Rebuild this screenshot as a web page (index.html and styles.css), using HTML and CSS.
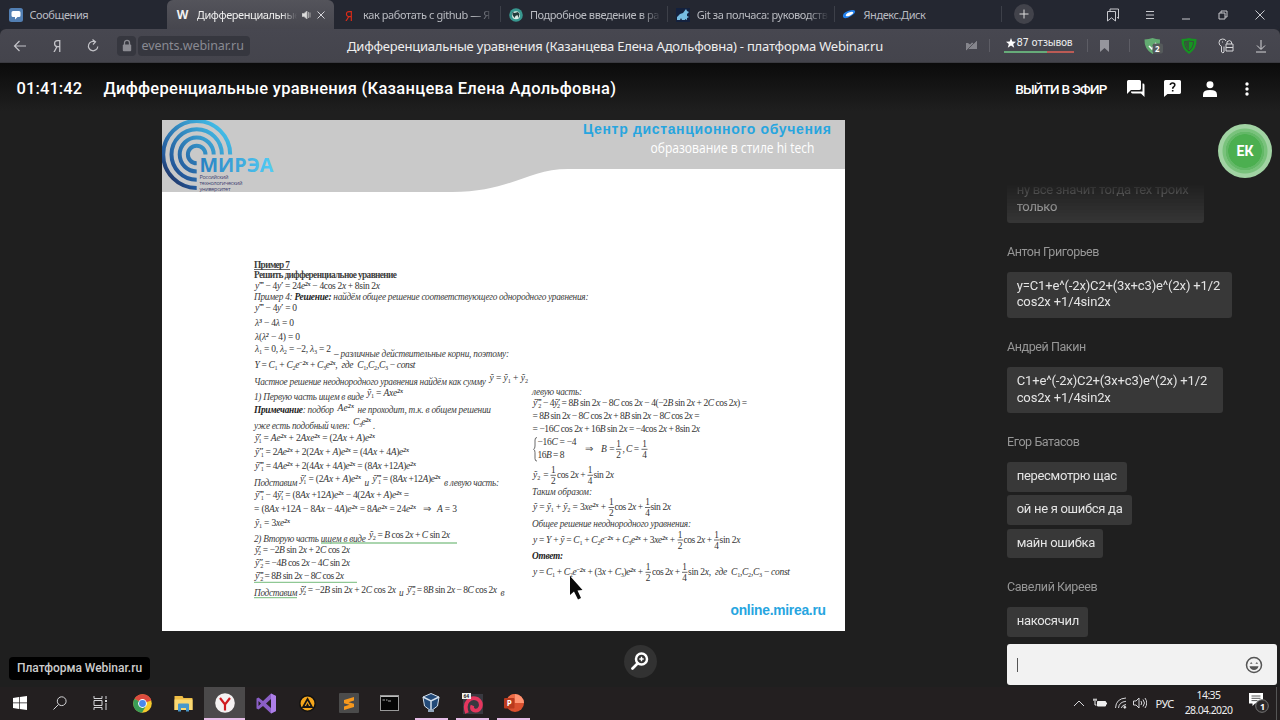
FILE: index.html
```html
<!DOCTYPE html>
<html lang="ru">
<head>
<meta charset="utf-8">
<title>Дифференциальные уравнения (Казанцева Елена Адольфовна)</title>
<link rel="stylesheet" href="styles.css">
</head>
<body>
<div class="screen">
  <div class="tabs">
    <div class="tab"><svg class="fav" viewBox="0 0 14 14"><rect width="14" height="14" rx="2.5" fill="#527fb3"/><path d="M4 3h6q1.500 0 1.500 1.500v3Q11.500 9 10 9H8.500L6 11.500V9H4Q2.500 9 2.500 7.500v-3Q2.500 3 4 3z" fill="#fff"/></svg><span class="tab-t">Сообщения</span></div>
    <div class="tab active"><b class="fav w">W</b><span class="tab-t fade">Дифференциальные</span>
      <svg class="snd" viewBox="0 0 9 8"><path d="M0 2.500h2L5 0v8L2 5.500H0zM6.500 1v6M8 1.500v5" fill="#ddd" stroke="#bbb" stroke-width=".8"/></svg>
      <svg class="cls" viewBox="0 0 8 8"><path d="M.5.5l7 7M7.500.5l-7 7" stroke="#d5d5da" fill="none"/></svg></div>
    <div class="tab"><span class="fav ya">Я</span><span class="tab-t fade">как работать с github — Я</span></div>
    <div class="tab sep"><svg class="fav" viewBox="0 0 14 14"><circle cx="7" cy="7" r="6.800" fill="#38978f"/><circle cx="7" cy="7.300" r="4" fill="#d9ece5"/><path d="M3.500 4l2 1 3.500-1 1.500 2-1 4-1-3-2 1-1 2-2-3z" fill="#233b3b"/></svg><span class="tab-t fade">Подробное введение в ра</span></div>
    <div class="tab sep"><svg class="fav" viewBox="0 0 14 14"><rect width="14" height="14" fill="#14213d"/><path d="M1 12V9l3-3 3-1 3-4 1 2 2 1-2 2v2l2 1-2 1v2l-2-1v1H6l-1-2-1 2z" fill="#76bce2"/></svg><span class="tab-t fade">Git за полчаса: руководств</span></div>
    <div class="tab sep"><svg class="fav" viewBox="0 0 14 14"><path d="M1 9Q0 5 6 3q6-2 7 0t-4 5Q3 12 1 9z" fill="#2280ed"/><ellipse cx="7.500" cy="6" rx="4" ry="1.600" fill="#fff" transform="rotate(-25 7.500 6)"/></svg><span class="tab-t">Яндекс.Диск</span></div>
    <div class="newtab sep"><svg width="20" height="20" viewBox="0 0 20 20"><circle cx="10" cy="10" r="10" fill="#42434b"/><path d="M10 5.500v9M5.500 10h9" stroke="#ddd"/></svg></div>
    <div class="win">
      <svg viewBox="0 0 14 14"><path d="M4 3V1h8.500v9.500L11 9.200M1.500 3.500h8V13L5.500 9.800 1.500 13z" /></svg>
      <svg viewBox="0 0 14 14"><path d="M3 3.500h8M3 7h8M3 10.500h8"/></svg>
      <svg viewBox="0 0 14 14"><path d="M3 11h8"/></svg>
      <svg viewBox="0 0 14 14"><path d="M3 5h6v6H3zM5 5V3h6v6H9"/></svg>
      <svg viewBox="0 0 14 14"><path d="M2.500 2.500l9 9M11.500 2.500l-9 9"/></svg>
    </div>
  </div>

  <div class="toolbar">
    <svg class="ic back" viewBox="0 0 14 14"><path d="M13 7H1.500M6.500 2l-5 5 5 5"/></svg>
    <span class="yhome">Я</span>
    <svg class="ic reload" viewBox="0 0 14 14"><path d="M11.800 7.500a4.700 4.700 0 1 1-2.700-4.700M6.500.5l3 2.300-2.500 2.700"/></svg>
    <span class="lock"><svg width="10" height="13" viewBox="0 0 10 13"><path d="M2.500 6V3.800a2.500 2.500 0 0 1 5 0V6" fill="none" stroke="#8b8b92" stroke-width="1.300"/><rect x=".8" y="5.500" width="8.400" height="6.800" rx="1" fill="#8b8b92"/></svg></span>
    <span class="url">events.webinar.ru</span>
    <span class="ptitle">Дифференциальные уравнения (Казанцева Елена Адольфовна) - платформа Webinar.ru</span>
    <div class="tools">
      <svg class="i1" width="13" height="13" viewBox="0 0 13 13"><path d="M1 4h2l2 1.500L7 3.500 9 4.500 12 1.500V10H3.500L1 12z" fill="#85858c"/><path d="M1 12L12 1" stroke="#45454d" stroke-width=".8"/></svg>
      <i class="bar"></i>
      <div class="rev"><span><svg width="10" height="10" viewBox="0 0 10 10"><path d="M5 0l1.300 3.500L10 3.700 7.200 6l1 3.700L5 7.600 1.800 9.700l1-3.700L0 3.700l3.700-.2z" fill="#fff"/></svg>87 отзывов</span><i></i></div>
      <i class="bar b2"></i>
      <svg class="i2" width="9" height="12" viewBox="0 0 9 12"><path d="M0 0h9v12L4.500 8 0 12z" fill="#96969d"/></svg>
      <i class="bar b3"></i>
      <svg class="i3" width="20" height="18" viewBox="0 0 20 18"><path d="M.5 2.500Q5 2 8.500 1q3.500 1 7.500 1.500 1 9-7.500 14.500Q0 12 .5 2.500z" fill="#63ac72"/><path d="M5 9l3 3 4-6" stroke="#fff" fill="none" stroke-width="1.500"/><rect x="8.500" y="6.500" width="10.500" height="10" rx="2" fill="#555a5b"/><text x="11" y="15" class="two">2</text></svg>
      <svg class="i4" width="16" height="18" viewBox="0 0 16 18"><path d="M.5 2Q5 2 8 1q3 1 7.500 1 .5 10-7.500 15Q0 12 .5 2z" fill="#169422"/><path d="M3.500 4.500Q6 4.500 8 4q2 .5 4.500.5 0 6-4.500 9.500Q3.500 11 3.500 4.500z" fill="none" stroke="#3b4a3d"/><path d="M8 4.500v9Q4.500 10 4.200 5z" fill="#335b39"/></svg>
      <svg class="i5 ln" width="16" height="16" viewBox="0 0 16 16"><path d="M3.500 14V8.300Q1 7.500 1 4.500 1 1 4.500 1q3 0 3.500 2M3.500 14l1.500 1 1-1V8.500M4 4h1M9 6V3.800q2.500-2.500 4.500 0V6M8 6v7h7V6zM8 9.500h7"/></svg>
      <svg class="i6 ln" width="12" height="14" viewBox="0 0 12 14"><path d="M6 1v9M2 6.500l4 4 4-4M1 13h10"/></svg>
    </div>
  </div>

  <div class="app">
    <div class="head">
      <span class="time">01:41:42</span>
      <span class="title">Дифференциальные уравнения (Казанцева Елена Адольфовна)</span>
      <span class="air">ВЫЙТИ В ЭФИР</span>
      <svg width="18" height="17" viewBox="0 0 18 17"><path d="M1.500 0h11Q14 0 14 1.500v7q0 1.500-1.500 1.500H4L0 14V1.500Q0 0 1.500 0zM15.500 3.500H16q1.500 0 1.500 1.500v12L14 13.500H5.500Q4 13.500 4 12v-.5h11.500z" fill="#fff"/></svg>
      <svg class="h2" width="18" height="17" viewBox="0 0 18 17"><path d="M1.500 0h14Q17 0 17 1.500v11q0 1.500-1.500 1.500H3.500L0 17V1.500Q0 0 1.500 0z" fill="#fff"/><path d="M6.300 5Q6.500 3 8.600 3q2.200 0 2.200 2 0 1-1.200 2-.9.7-.9 1.800M8.700 10v1.600" stroke="#111" stroke-width="1.600" fill="none"/></svg>
      <svg class="h3" width="14" height="16" viewBox="0 0 14 16"><circle cx="7" cy="3.700" r="3.500" fill="#fff"/><path d="M0 16v-2.500Q0 9 7 9t7 4.500V16z" fill="#fff"/></svg>
      <svg class="h4" width="4" height="14" viewBox="0 0 4 14"><g fill="#fff"><circle cx="2" cy="2" r="1.700"/><circle cx="2" cy="7" r="1.700"/><circle cx="2" cy="12" r="1.700"/></g></svg>
    </div>
    <div class="body">
      <div class="stage">
        <svg class="slide" viewBox="162 120 683 511">
          <defs>
            <linearGradient id="ring" x1="165" y1="186" x2="226" y2="130" gradientUnits="userSpaceOnUse"><stop offset="0" stop-color="#1f2148"/><stop offset=".25" stop-color="#245a9c"/><stop offset="1" stop-color="#43c0ea"/></linearGradient>
            <linearGradient id="word" x1="200" y1="0" x2="274" y2="0" gradientUnits="userSpaceOnUse"><stop offset="0" stop-color="#2680c2"/><stop offset="1" stop-color="#52cdf5"/></linearGradient>
          </defs>
          <rect x="162" y="120" width="683" height="511" fill="#fff"/>
          <path d="M162 120H845V169H568C528 169 510 192 452 192H162z" fill="#c9c9c9"/>
          <g fill="none" stroke="url(#ring)" stroke-width="4">
            <path d="M230.200 154.500a33.500 33.500 0 1 0-33.500 33.500"/>
            <path d="M221.900 154.500a25.200 25.200 0 1 0-25.200 25.200"/>
            <path d="M213.700 154.500a17 17 0 1 0-17 17"/>
            <path d="M205.500 154.500a8.800 8.800 0 1 0-8.800 8.800"/>
          </g>
          <text class="word" x="199.500" y="171.700" textLength="74" lengthAdjust="spacingAndGlyphs" fill="url(#word)">МИРЭА</text>
          <g class="tiny"><text x="199.500" y="178.500" textLength="29">Российский</text><text x="199.500" y="184.500" textLength="43">технологический</text><text x="199.500" y="190.500" textLength="31">университет</text></g>
          <text class="cdo" x="583" y="134" textLength="248">Центр дистанционного обучения</text>
          <text class="hi" x="650.500" y="152.500" textLength="164" lengthAdjust="spacingAndGlyphs">образование в стиле hi tech</text>
          <text class="cdo site" x="730.500" y="614.500" textLength="95.500">online.mirea.ru</text>

          <g class="prose">
            <text class="bd" x="254" y="268" textLength="36">Пример 7</text><path d="M254 269.500h36" stroke="#444" stroke-width=".8"/>
            <text class="bd" x="254" y="277.500" textLength="143">Решить дифференциальное уравнение</text>
            <text x="254" y="300.300" textLength="334.500">Пример 4: <tspan class="bi">Решение:</tspan> найдём общее решение соответствующего однородного уравнения:</text>
            <text x="334" y="356.500" textLength="175">– различные действительные корни, поэтому:</text>
            <text x="254" y="385" textLength="232">Частное решение неоднородного уравнения найдём как сумму</text>
            <text x="254" y="399.500" textLength="110">1) Первую часть ищем в виде</text>
            <text x="254" y="412.500" textLength="80"><tspan class="bi">Примечание</tspan>: подбор</text>
            <text x="357.500" y="412.500" textLength="133.500">не проходит, т.к. в общем решении</text>
            <text x="254" y="428.700" textLength="96">уже есть подобный член:</text>
            <text x="373" y="428.700">.</text>
            <text x="254" y="485.500" textLength="43.500">Подставим</text>
            <text x="364.500" y="485.500">и</text>
            <text x="444" y="485.500" textLength="55">в левую часть:</text>
            <text x="254" y="542" textLength="112">2) Вторую часть ищем в виде</text>
            <text x="254" y="596" textLength="43.500">Подставим</text>
            <text x="399" y="596">и</text>
            <text x="500.500" y="596">в</text>
            <text x="532" y="394.500" textLength="50">левую часть:</text>
            <text x="532" y="494.500" textLength="60">Таким образом:</text>
            <text x="532" y="527" textLength="159">Общее решение неоднородного уравнения:</text>
            <text x="532" y="558.500" textLength="31"><tspan class="bi">Ответ:</tspan></text>
          </g>
          <path d="M321 543h136M254 582.300h103M254 597.600h43" stroke="#8fc894" stroke-width="1.300"/>

          <g class="math">
            <text x="255" y="289" textLength="125">y^{‴} − 4y^{′} = 24e^{2x} − 4cos 2x + 8sin 2x</text>
            <text x="255" y="311" textLength="42">y^{‴} − 4y^{′} = 0</text>
            <text x="255" y="325.700" textLength="39">λ^{3} − 4λ = 0</text>
            <text x="255" y="339.700" textLength="45">λ(λ^{2} − 4) = 0</text>
            <text x="255" y="352" textLength="76">λ_{1} = 0, λ_{2} = −2, λ_{3} = 2</text>
            <text x="254.500" y="368.300" textLength="161">Y = C_{1} + C_{2}e^{−2x} + C_{3}e^{2x},  где  C_{1},C_{2},C_{3} − const</text>
            <text x="489.500" y="381" textLength="38.500">ỹ = ỹ_{1} + ỹ_{2}</text>
            <text x="367" y="396" textLength="36">ỹ_{1} = Axe^{2x}</text>
            <text x="337.500" y="410.500" textLength="16.500">Ae^{2x}</text>
            <text x="353" y="424.500" textLength="18">C_{3}e^{2x}</text>
            <text x="255" y="440.700" textLength="120">ỹ^{′}_{1} = Ae^{2x} + 2Axe^{2x} = (2Ax + A)e^{2x}</text>
            <text x="255" y="454.500" textLength="154">ỹ^{″}_{1} = 2Ae^{2x} + 2(2Ax + A)e^{2x} = (4Ax + 4A)e^{2x}</text>
            <text x="255" y="468.700" textLength="161">ỹ^{‴}_{1} = 4Ae^{2x} + 2(4Ax + 4A)e^{2x} = (8Ax +12A)e^{2x}</text>
            <text x="300" y="482" textLength="61">ỹ^{′}_{1} = (2Ax + A)e^{2x}</text>
            <text x="372.500" y="482" textLength="68">ỹ^{‴}_{1} = (8Ax +12A)e^{2x}</text>
            <text x="255" y="497.500" textLength="154">ỹ^{‴}_{1} − 4ỹ^{′}_{1} = (8Ax +12A)e^{2x} − 4(2Ax + A)e^{2x} =</text>
            <text x="254" y="511.500" textLength="203">= (8Ax +12A − 8Ax − 4A)e^{2x} = 8Ae^{2x} = 24e^{2x}   ⇒   A = 3</text>
            <text x="255" y="526" textLength="35">ỹ_{1} = 3xe^{2x}</text>
            <text x="369" y="538" textLength="81">ỹ_{2} = B cos 2x + C sin 2x</text>
            <text x="255" y="553" textLength="95">ỹ^{′}_{2} = −2B sin 2x + 2C cos 2x</text>
            <text x="255" y="566" textLength="95">ỹ^{″}_{2} = −4B cos 2x − 4C sin 2x</text>
            <text x="255" y="579" textLength="89">ỹ^{‴}_{2} = 8B sin 2x − 8C cos 2x</text>
            <text x="300" y="592.500" textLength="96">ỹ^{′}_{2} = −2B sin 2x + 2C cos 2x</text>
            <text x="407" y="592.500" textLength="90">ỹ^{‴}_{2} = 8B sin 2x − 8C cos 2x</text>

            <text x="533" y="405.500" textLength="214">ỹ^{‴}_{2} − 4ỹ^{′}_{2} = 8B sin 2x − 8C cos 2x − 4(−2B sin 2x + 2C cos 2x) =</text>
            <text x="532.500" y="418.500" textLength="167">= 8B sin 2x − 8C cos 2x + 8B sin 2x − 8C cos 2x =</text>
            <text x="532.500" y="431.500" textLength="167.500">= −16C cos 2x + 16B sin 2x = −4cos 2x + 8sin 2x</text>
            <text x="537.500" y="445" textLength="39">−16C = −4</text>
            <text x="537.500" y="458" textLength="27">16B = 8</text>
            <text x="584.500" y="452">⇒</text>
            <text x="601" y="452" textLength="13.500">B =</text>
            <text x="622.500" y="452" textLength="16.500">, C =</text>
            <text x="533" y="478" textLength="15.500">ỹ_{2} =</text>
            <text x="557" y="478" textLength="28.500">cos 2x +</text>
            <text x="593.500" y="478" textLength="20.500">sin 2x</text>
            <text x="533" y="510.300" textLength="73">ỹ = ỹ_{1} + ỹ_{2} = 3xe^{2x} +</text>
            <text x="614.500" y="510.300" textLength="28.500">cos 2x +</text>
            <text x="650.500" y="510.300" textLength="20.500">sin 2x</text>
            <text x="533" y="542.700" textLength="142">y = Y + ỹ = C_{1} + C_{2}e^{−2x} + C_{3}e^{2x} + 3xe^{2x} +</text>
            <text x="683.500" y="542.700" textLength="28.500">cos 2x +</text>
            <text x="719.500" y="542.700" textLength="21">sin 2x</text>
            <text x="533" y="575" textLength="110">y = C_{1} + C_{2}e^{−2x} + (3x + C_{3})e^{2x} +</text>
            <text x="652" y="575" textLength="28">cos 2x +</text>
            <text x="688" y="575" textLength="102">sin 2x,  где  C_{1},C_{2},C_{3} − const</text>
          </g>
          <path d="M537 437.500q-2 0-2 2.500v6q0 3-1.500 3.300 1.500.3 1.500 3.300v6q0 2.500 2 2.500" fill="none" stroke="#444" stroke-width=".8"/>
          <path d="M616 449.300h5.500M641.500 449.300h6M550.500 475.300h5.500M587.500 475.300h5.500M608.500 507.500h5.500M645 507.500h5.500M677.500 540h5.500M714 540h5.500M645.500 572.300h5.500M682 572.300h5.500" stroke="#444" stroke-width=".8"/>
          <g class="frac">
            <text x="618.700" y="447">1</text><text x="618.700" y="458">2</text><text x="644.500" y="447">1</text><text x="644.500" y="458">4</text>
            <text x="553.300" y="472.700">1</text><text x="553.300" y="484">2</text><text x="590.200" y="472.700">1</text><text x="590.200" y="484">4</text>
            <text x="611.300" y="505">1</text><text x="611.300" y="516.200">2</text><text x="647.700" y="505">1</text><text x="647.700" y="516.200">4</text>
            <text x="680.200" y="537.500">1</text><text x="680.200" y="548.700">2</text><text x="716.700" y="537.500">1</text><text x="716.700" y="548.700">4</text>
            <text x="648.200" y="569.800">1</text><text x="648.200" y="581">2</text><text x="684.700" y="569.800">1</text><text x="684.700" y="581">4</text>
          </g>
          <path d="M570 576v19l4-3.500 4 8 3-1.500-3.500-7.500 5-.5z" fill="#0a0a0a"/>
        </svg>
        <div class="zoomer"><svg width="18" height="18" viewBox="0 0 18 18"><circle cx="10.500" cy="7" r="5.500" fill="none" stroke="#fff" stroke-width="2.500"/><path d="M10.500 4.800v4.400M8.300 7h4.400" stroke="#fff" stroke-width="1.400"/><path d="M1.500 16.500L6.500 11.500" stroke="#fff" stroke-width="2.700" stroke-linecap="round"/></svg></div>
        <div class="tip">Платформа Webinar.ru</div>
      </div>
      <div class="side">
        <div class="ava"><span>ЕК</span></div>
        <div class="chat">
          <div class="grp"><p class="msg m1">ну все значит тогда тех троих<br>только</p></div>
          <div class="grp"><h4>Антон Григорьев</h4><p class="msg m2">y=C1+e^(-2x)C2+(3x+c3)e^(2x) +1/2<br>cos2x +1/4sin2x</p></div>
          <div class="grp"><h4>Андрей Пакин</h4><p class="msg m3">C1+e^(-2x)C2+(3x+c3)e^(2x) +1/2<br>cos2x +1/4sin2x</p></div>
          <div class="grp"><h4>Егор Батасов</h4><p class="msg m4">пересмотрю щас</p><p class="msg m5">ой не я ошибся да</p><p class="msg m6">майн ошибка</p></div>
          <div class="grp"><h4>Савелий Киреев</h4><p class="msg m7">накосячил</p></div>
        </div>
        <div class="input"><i class="caret"></i><svg width="18" height="18" viewBox="0 0 18 18"><circle cx="9" cy="9" r="7.500" fill="none" stroke="#555" stroke-width="1.500"/><path d="M4.500 10.200h9Q12.500 14 9 14t-4.500-3.800zM5 7.800Q6.200 4.500 7.500 7.800zM10.500 7.800q1.300-3.300 2.500 0z" fill="#555"/></svg></div>
      </div>
    </div>
  </div>

  <div class="taskbar">
    <div class="t s"><svg width="14" height="14" viewBox="0 0 14 14"><path d="M0 2l6-.9v5.500H0zM6.700 1L14 0v6.600H6.700zM0 7.300h6v5.600L0 12zM6.700 7.300H14V14l-7.300-1z" fill="#fff"/></svg></div>
    <div class="t s"><svg class="ln" width="14" height="14" viewBox="0 0 14 14"><circle cx="8.700" cy="5.200" r="4.400"/><path d="M5.500 8.500L.5 13.500"/></svg></div>
    <div class="t s"><svg class="ln" width="15" height="14" viewBox="0 0 15 14"><path d="M1 0v2.500h8V0M1 4.500h8v5H1zM1 14v-2.500h8V14M13 0v3M13 7v7"/><rect x="12.500" y="4.500" width="1" height="1"/></svg></div>
    <div class="t c1"><svg width="19" height="19" viewBox="-9.500 -9.500 19 19"><circle r="9.300" fill="#f5c92d"/><path d="M0 0L-8 -4.650A9.300 9.300 0 0 1 8.800 -3z" fill="#dd4b3f"/><path d="M-8 -4.650A9.300 9.300 0 0 0 -.5 9.300L3.700 2z" fill="#3a9d57"/><path d="M0-4.300H8.300" stroke="#dd4b3f" stroke-width="1.500"/><circle r="4.400" fill="#fff"/><circle r="3.400" fill="#4a87ed"/></svg></div>
    <div class="t"><svg width="19" height="17" viewBox="0 0 19 17"><path d="M.5 1h8l1 2H18q.5 0 .5.500V15H.5z" fill="#efbd45"/><path d="M.5 4.500h18V15H.5z" fill="#fbd872"/><path d="M4 16.500V9.500q0-1 1-1h9q1 0 1 1v7h-3V13H7v3.500z" fill="#4898cc"/></svg></div>
    <div class="t on"><svg width="20" height="20" viewBox="0 0 20 20"><circle cx="10" cy="10" r="9.800" fill="#f4f1f2"/><path d="M5 5l5 6.500L15 5M10 11v6.500" fill="none" stroke="#d01b20" stroke-width="2.200"/></svg></div>
    <div class="t"><svg width="21" height="21" viewBox="0 0 21 21"><path d="M15 .5l5 2.500v15l-5 2.500L7 13l-4.500 3.500L.5 15.500v-10l2-1L7 8z M15 6l-5 4.500 5 4.500zM2.500 8v5l2.500-2.500z" fill="#8b5fc7" fill-rule="evenodd"/><path d="M15 .5l5 2.500v15l-5 2.500z" fill="#ad7fe8"/></svg></div>
    <div class="t"><svg width="17" height="17" viewBox="0 0 17 17"><circle cx="8.500" cy="8.500" r="7.700" fill="#f6a71c" stroke="#111" stroke-width="1.500"/><path d="M8.500 4l4.500 8H4z" fill="none" stroke="#161616" stroke-width="1.800"/><path d="M8.500 8l1.500 3H7z" fill="#161616"/></svg></div>
    <div class="t"><svg width="20" height="20" viewBox="0 0 20 20"><rect width="20" height="20" rx="1" fill="#4b4b4b"/><path d="M15 4v3.500L9.500 9.300l5.500 1.500V14l-10 3v-3.400l5.500-1.800L5 10.300V7z" fill="#f7981d"/></svg></div>
    <div class="t"><svg width="19" height="16" viewBox="0 0 19 16"><rect x=".5" y=".5" width="18" height="15" fill="#050505" stroke="#999"/><path d="M1 1.500h17" stroke="#bbb"/><path d="M2.500 5H5M6 5h1.500M8 6h3" stroke="#aaa"/></svg></div>
    <div class="t run"><svg width="18" height="20" viewBox="0 0 18 20"><path d="M9 .5l8 3.500-1.500 9L9 18l-6.500-5L1 4z" fill="#234a78" stroke="#d4e0ec"/><path d="M1 4l8 4 8-4M9 8v9" stroke="#d4e0ec" fill="none" stroke-width="1.500"/><path d="M6 17h6v2H6z" fill="#91a6bd"/></svg></div>
    <div class="t run"><svg width="21" height="21" viewBox="0 0 21 21"><rect x="1" y="1" width="20" height="20" fill="#393940"/><path d="M5 20Q2 12 6 8q4-4.500 9.500-2 4.500 3 3 8-2 4.500-6 3.500-3.500-1.500-2-5" fill="none" stroke="#e4365e" stroke-width="3.800"/><rect width="9" height="6" fill="#eee"/><text x="1.500" y="5" class="sixfour">64</text></svg></div>
    <div class="t run"><svg width="20" height="20" viewBox="0 0 20 20"><circle cx="11" cy="10" r="9" fill="#d9502f"/><path d="M11 1a9 9 0 0 1 9 9h-9z" fill="#ff9472"/><path d="M11 1a9 9 0 0 0-8 5l8 4z" fill="#ed6c47"/><rect x="0" y="5" width="10.500" height="10.500" rx="1" fill="#b93a1e"/><text x="2.800" y="13" class="pp">P</text></svg></div>
    <div class="tray">
      <svg class="ln a" width="12" height="7" viewBox="0 0 12 7"><path d="M1 6l5-5 5 5"/></svg>
      <svg class="b" width="14" height="10" viewBox="0 0 14 10"><path d="M4.500 3.500h8v4.500h-8z" fill="#eee" stroke="#eee"/><path d="M13.500 4.500v2M0 2h4M1 .5v2M3 .5v2M2 3v4h1.500" stroke="#eee" fill="none"/></svg>
      <svg class="ln c" width="12" height="12" viewBox="0 0 12 12"><path d="M.5 11Q1 1.500 11 1M3.500 11Q4 5 11 4.300M6.300 11Q7 8 11 7.500"/><circle cx="9.800" cy="10.200" r="1" fill="#eee"/></svg>
      <svg class="ln d" width="14" height="12" viewBox="0 0 14 12"><path d="M.5 4H3l3-3v10L3 8H.5zM8 4q1.500 2 0 4M10 2.500q3 3.500 0 7M12 1q3.500 5 0 10"/></svg>
      <span class="lang">РУС</span>
      <span class="clock">14:35<br>28.04.2020</span>
      <svg class="n" width="21" height="22" viewBox="0 0 21 22"><path d="M0 1h14v10.500H6L3.500 14v-2.500H0z" fill="#fff"/><path d="M2.500 4h9M2.500 6.300h9M2.500 8.600h6" stroke="#444" stroke-width=".9"/><circle cx="13" cy="14" r="6.300" fill="#2b2829" stroke="#777"/><text x="11" y="17.500" class="one">1</text></svg>
    </div>
  </div>
</div>
<script src="math.js"></script>
</body>
</html>
```
FILE: styles.css
```css
* { box-sizing: border-box; }
body { margin: 0; background: #1f1f1f; overflow: hidden; }
.screen { width: 1280px; height: 720px; display: flex; flex-direction: column; }
.ln { fill: none; stroke: #d5d5d8; stroke-width: 1; }

.tabs { height: 29px; display: flex; background: #242731; font: 11px "Noto Sans", sans-serif; letter-spacing: -.42px; color: #b9bbc1; flex: none; }
.tab { width: 166.800px; display: flex; align-items: center; padding-left: 8.500px; position: relative; }
.tab.active { background: linear-gradient(#54545b, #46464e); border-radius: 6px 6px 0 0; color: #eee; padding-left: 10px; z-index: 1; }
.sep::before { content: ""; position: absolute; left: 0; top: 6px; height: 16px; width: 1px; background: #3d4049; }
.fav { width: 14px; height: 14px; flex: none; margin-right: 7px; }
.tab-t { width: 132px; white-space: nowrap; overflow: hidden; }
.fade { -webkit-mask-image: linear-gradient(90deg, #000 84%, transparent); mask-image: linear-gradient(90deg, #000 84%, transparent); }
.active .tab-t { width: 100px; margin-right: 5px; }
.w { font: bold 12px/14px "Open Sans", sans-serif; color: #f1f1f1; margin-right: 6px; }
.ya { font: 15px/14px "Noto Sans", sans-serif; color: #dc2b18; text-align: center; transform: scaleX(.85); }
.snd { width: 9px; height: 8px; margin-right: 6px; }
.cls { width: 8px; height: 8px; }
.newtab { position: relative; width: 62px; padding: 4px 0 0 13px; }
.win { display: flex; align-items: center; gap: 22.800px; margin-left: 43px; }
.win svg { width: 14px; height: 14px; fill: none; stroke: #c8c9ce; flex: none; }

.toolbar { height: 34px; position: relative; background: linear-gradient(#474750, #44444c); border-radius: 6px 6px 0 0; display: flex; align-items: center; flex: none; color: #eee; font-family: "Noto Sans", sans-serif; box-shadow: 0 -4px 0 0 #242731; border-bottom: 1px solid #3a3a40; }
.ic { width: 14px; height: 14px; fill: none; stroke: #c4c4c9; stroke-width: 1.200; flex: none; }
.back { margin-left: 12.500px; }
.yhome { width: 12px; margin-left: 25px; font: 16px "Noto Sans", sans-serif; color: #c4c4c9; transform: scaleX(.85); }
.reload { margin-left: 22.500px; }
.lock { width: 19px; height: 20px; background: #36373f; border-radius: 4px; margin-left: 17px; display: flex; align-items: center; justify-content: center; flex: none; }
.url { width: 112px; height: 20px; background: #36373f; border-radius: 4px; margin-left: 2px; padding-left: 3.500px; font-size: 12.500px; line-height: 19px; letter-spacing: -.08px; color: #898a92; flex: none; }
.ptitle { width: 540px; margin-left: 97px; font-size: 13px; letter-spacing: -.21px; white-space: nowrap; flex: none; }
.tools { display: flex; align-items: center; margin-left: 78px; }
.bar { width: 1px; height: 13px; background: #5d5d65; margin-left: 10.500px; }
.rev { width: 70px; margin-left: 14px; font: 10px/14px "DejaVu Sans", sans-serif; margin-top: -2px; white-space: nowrap; }
.rev span { display: flex; align-items: center; gap: 1px; padding-left: 2px; letter-spacing: -.3px; }
.rev i { display: block; height: 2px; margin-top: 1px; background: linear-gradient(90deg, #66ab79 62%, #bb5b55 62%); }
.b2 { margin-left: 13px; }
.i2 { margin-left: 12px; }
.b3 { margin-left: 20px; }
.i3 { margin-left: 14px; }
.i4 { margin-left: 17px; }
.i5 { margin-left: 21px; }
.i6 { margin-left: 21.500px; }
.two { font: bold 8px "Open Sans", sans-serif; fill: #fff; }

.app { height: 623.500px; background: linear-gradient(#0b0b0b, #1f1f1f 48px); flex: none; font-family: Roboto, sans-serif; }
.head { height: 57px; display: flex; align-items: center; padding: 0 31px 6px 16.500px; color: #fff; font-weight: 500; font-size: 16.500px; white-space: nowrap; }
.time { width: 87px; letter-spacing: .1px; }
.title { width: 912.500px; letter-spacing: .28px; }
.air { width: 92px; margin-right: 20px; font-size: 13.500px; letter-spacing: -.75px; }
.h2 { margin-left: 19px; }
.h3 { margin-left: 21px; }
.h4 { margin-left: 28px; }
.body { display: flex; height: 566.500px; }
.stage { width: 1007px; position: relative; padding-left: 162px; }
.slide { display: block; width: 683px; height: 511px; }
.zoomer { width: 33px; height: 33px; border-radius: 50%; background: #323232; margin: 13.500px 0 0 461.500px; display: flex; align-items: center; justify-content: center; }
.tip { position: absolute; left: 9px; top: 536.500px; width: 141px; height: 23.500px; border-radius: 4px; background: #000; color: #ccc; font: 500 12px/23px Roboto, sans-serif; text-align: center; letter-spacing: -.02px; }

.side { width: 273px; padding-top: 4px; }
.ava { width: 54px; height: 54px; border-radius: 50%; margin-left: 211px; background: radial-gradient(#4caf50 0 16.500px, #63b867 17px 19px, #79c27c 19.500px 22px, #a1d3a3 23px); display: flex; align-items: center; justify-content: center; color: #fff; font-weight: 700; font-size: 14px; }
.chat { height: 459px; display: flex; flex-direction: column; justify-content: flex-end; align-items: flex-start; gap: 20.700px; overflow: hidden; -webkit-mask-image: linear-gradient(transparent 5px, #000 48px); mask-image: linear-gradient(transparent 5px, #000 48px); }
.grp { display: flex; flex-direction: column; gap: 3.300px; }
.grp h4 { margin: 0 0 -3.300px; height: 28px; font: 12.500px/16px Roboto, sans-serif; letter-spacing: -.42px; color: #969696; }
.msg { margin: 0; background: #383838; border-radius: 3px; color: #e4e4e4; font-size: 13px; line-height: 16.700px; letter-spacing: -.3px; padding: 6px 0 7.200px 9.700px; white-space: nowrap; }
.m1 { width: 196.500px; }
.m2 { width: 224.500px; letter-spacing: -.14px; }
.m3 { width: 215.500px; letter-spacing: -.14px; }
.m4 { width: 120px; }
.m5 { width: 125px; }
.m6 { width: 96px; }
.m7 { width: 80.500px; }
.input { width: 270px; height: 41px; margin-top: 7px; border-radius: 3px; background: #f2f2f2; display: flex; align-items: center; justify-content: space-between; padding: 0 14px 0 10px; }
.caret { width: 1px; height: 14px; background: #555; }

.taskbar { height: 33.500px; background: #231f20; display: flex; align-items: stretch; flex: none; }
.t { width: 41.300px; display: flex; align-items: center; justify-content: center; position: relative; }
.t.s { width: 40px; }
.c1 { margin-left: 1.500px; }
.on { background: #4b494a; }
.on::after, .run::after { content: ""; position: absolute; bottom: 0; left: 0; right: 0; height: 2px; background: #e6bce6; }
.run::after { left: 4px; right: 4px; }
.sixfour { font: bold 5px Roboto, sans-serif; fill: #222; }
.pp { font: bold 8px "Open Sans", sans-serif; fill: #fff; }
.tray { margin-left: auto; width: 204.500px; display: flex; align-items: center; font: 11px "Noto Sans", sans-serif; color: #eee; border-right: 1px solid #555; margin-right: 3px; }
.tray svg { flex: none; }
.tray .b { margin-left: 8px; }
.tray .c { margin-left: 8px; }
.tray .d { margin-left: 6px; }
.lang { margin-left: 9px; width: 20px; letter-spacing: -.5px; }
.clock { width: 52px; margin-left: 7px; text-align: center; line-height: 15px; font-size: 10.500px; letter-spacing: -.6px; white-space: nowrap; }
.n { margin-left: 14px; }
.one { font: bold 9px "Noto Sans", sans-serif; fill: #fff; }

.word { font: bold 20px "Open Sans", sans-serif; }
.tiny { font: 5.500px "Open Sans", sans-serif; fill: #3f4270; }
.cdo { font: bold 14px "Liberation Sans", sans-serif; fill: #27a5df; }
.site { font-size: 13.800px; }
.hi { font: 14px "Open Sans", sans-serif; fill: #fff; }
.prose { font: italic 9.300px "Liberation Serif", serif; fill: #3c3c3c; }
.bd { font-style: normal; font-weight: bold; }
.bi { font-weight: bold; fill: #222; }
.math { font: 9.500px "Liberation Serif", serif; fill: #333; }
.math .v { font-style: italic; }
.math .sup { font-size: 6.200px; font-weight: bold; baseline-shift: 3.300px; font-style: italic; }
.math .prime { font-size: 9px; font-weight: bold; baseline-shift: 1px; }
.math .sub { font-size: 6.200px; baseline-shift: -2px; }
.frac { font: 9.300px "Liberation Serif", serif; fill: #333; text-anchor: middle; }
```
FILE: math.js
```javascript
// Typesets the formulas: ^{..} is a superscript, _{..} a subscript,
// variables become italic, function names stay upright.
const NS = "http://www.w3.org/2000/svg";
const TOKEN = /\^\{([^}]*)\}|_\{([^}]*)\}|(cos |sin )|(const|[A-Za-zλỹ]|[А-Яа-я]+)|([^A-Za-zА-Яа-яλỹ^_]+)/g;

document.querySelectorAll(".math text").forEach((el) => {
  const source = el.textContent;
  el.textContent = "";
  let afterPrime = false;
  for (const m of source.matchAll(TOKEN)) {
    const prime = m[1] && /[′″‴]/.test(m[1]);
    const span = document.createElementNS(NS, "tspan");
    span.textContent = (m[1] || m[2] || m[0]).replace(/ /g, "\u00a0");
    if (prime) span.setAttribute("class", "prime");
    else if (m[1]) span.setAttribute("class", "sup");
    else if (m[2]) {
      span.setAttribute("class", "sub");
      if (afterPrime) span.setAttribute("dx", "-3");
    } else if (m[4]) span.setAttribute("class", "v");
    afterPrime = prime;
    el.appendChild(span);
  }
});
```
